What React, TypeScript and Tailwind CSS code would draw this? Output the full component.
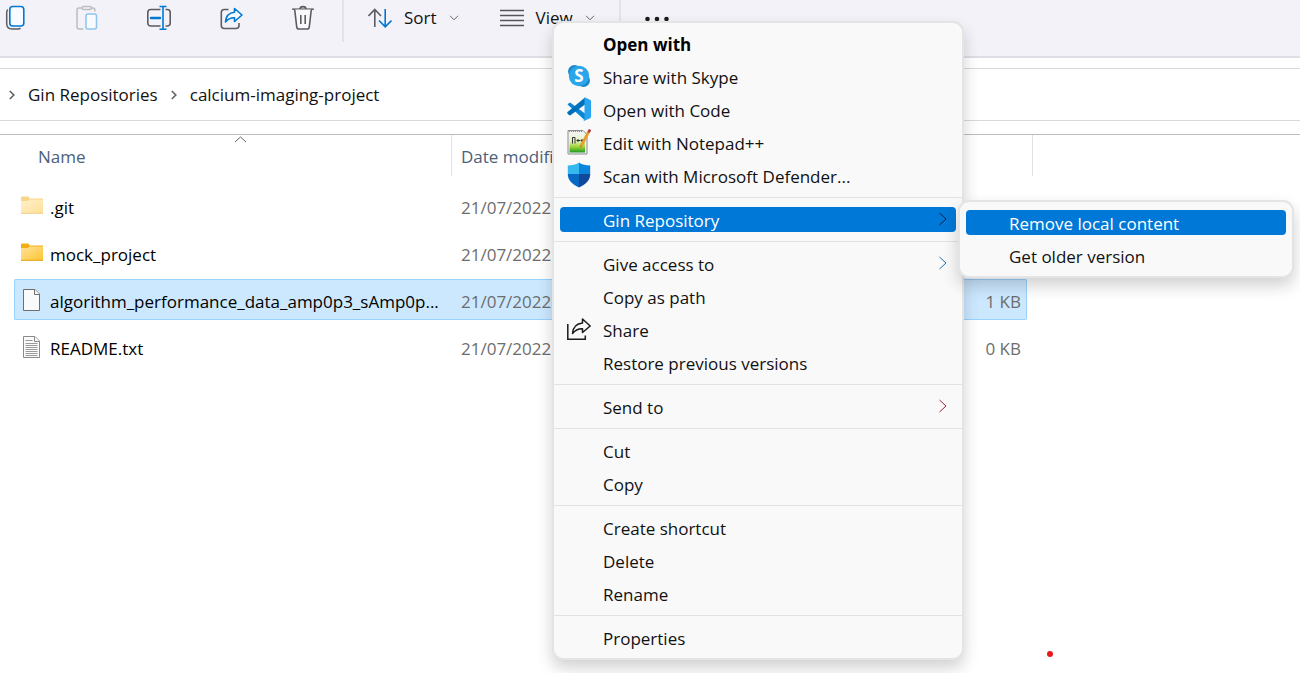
import type { ReactNode } from "react";

const BLUE = "#0078d4";
const GRAY = "#5c5c62";

function CopyIcon() {
  return (
    <svg width="24" height="32" viewBox="0 0 24 32" fill="none" aria-hidden="true">
      <path d="M4.800 9.500C3.900 10.300 3.700 11.500 3.700 13v10.500c0 3.500 1.600 5.500 5.500 5.500h6c1 0 1.700-.3 2.300-1" stroke={GRAY} strokeWidth="1.500" />
      <rect x="6.800" y="6.500" width="14" height="19.500" rx="3" stroke={BLUE} strokeWidth="1.600" fill="#f8fbff" />
    </svg>
  );
}

function PasteIcon() {
  return (
    <svg width="24" height="32" viewBox="0 0 24 32" fill="none" aria-hidden="true">
      <g stroke="#bcbcc2" strokeWidth="1.500">
        <path d="M6.500 8h-2.500c-1.200 0-2 .8-2 2v17c0 1.200.8 2 2 2H8.500" />
        <path d="M17 8h1c1 0 1.800.8 1.800 1.800V11.500" />
        <rect x="7" y="6.600" width="9.500" height="3" rx="1.500" />
      </g>
      <rect x="11" y="14" width="10.500" height="15" rx="2" stroke="#8fc3ee" strokeWidth="1.500" fill="#f7faff" />
    </svg>
  );
}

function RenameIcon() {
  return (
    <svg width="24" height="32" viewBox="0 0 24 32" fill="none" aria-hidden="true">
      <path d="M13.500 9.500H3.700A3 3 0 0 0 .8 12.500v10.500a3 3 0 0 0 3 3H13.500M18.500 9.500h1.700a3 3 0 0 1 3 3v10.500a3 3 0 0 1-3 3H18.500" stroke={GRAY} strokeWidth="1.600" />
      <path d="M4 18h9" stroke={BLUE} strokeWidth="2.400" strokeLinecap="round" />
      <path d="M16 6.500v22M12.500 6.500h7M12.500 29.200h7" stroke={BLUE} strokeWidth="1.600" />
    </svg>
  );
}

function ShareIcon() {
  return (
    <svg width="24" height="32" viewBox="0 0 24 32" fill="none" aria-hidden="true">
      <path d="M9.500 9.500H5.300a3 3 0 0 0-3 3V25.500a3 3 0 0 0 3 3H17a3 3 0 0 0 3-3v-2.500" stroke={GRAY} strokeWidth="1.600" />
      <path d="M15.500 8.500l7.500 6.500-7.500 6.500v-3.800c-4-.2-6.500 1-9 4.200.5-6 3.700-9.200 9-9.700z" stroke={BLUE} strokeWidth="1.600" strokeLinejoin="round" fill="#f7faff" />
    </svg>
  );
}

function TrashIcon() {
  return (
    <svg width="24" height="32" viewBox="0 0 24 32" fill="none" stroke={GRAY} strokeWidth="1.600" aria-hidden="true">
      <path d="M1.200 9.200h21.600" />
      <path d="M9 9.200c0-1.600 1.200-2.600 3-2.600s3 1 3 2.600" />
      <path d="M3.700 9.500l2 17.300c.2 1.500 1 2.200 2.300 2.200h8c1.300 0 2.100-.7 2.300-2.200l2-17.300" fill="#fafafc" />
      <path d="M9.800 15v9M14.200 15v9" />
    </svg>
  );
}

function SortIcon() {
  return (
    <svg width="24" height="32" viewBox="0 2 24 32" fill="none" strokeWidth="1.600" aria-hidden="true">
      <path d="M6.800 27V9.500M.5 16l6.300-6.500 6.200 6.500" stroke={GRAY} />
      <path d="M17.200 9v17.500M11 20.500l6.200 6.300 6.300-6.300" stroke={BLUE} />
    </svg>
  );
}

function ViewIcon() {
  return (
    <svg width="24" height="32" viewBox="0 0 24 32" aria-hidden="true">
      <path d="M0 8.500h24M0 13.500h24M0 18.500h24M0 23.500h24" stroke="#55555a" strokeWidth="1.300" />
    </svg>
  );
}

function DotsIcon() {
  return (
    <svg width="24" height="32" viewBox="0 0 24 32" fill="#1b1b1b" aria-hidden="true">
      <circle cx="2.500" cy="19" r="2.300" />
      <circle cx="12" cy="19" r="2.300" />
      <circle cx="21.500" cy="19" r="2.300" />
    </svg>
  );
}

function ChevronDown() {
  return (
    <svg width="10" height="6" viewBox="0 0 10 6" fill="none" stroke="#66666b" aria-hidden="true">
      <path d="M1 .8l4 4 4-4" />
    </svg>
  );
}

function Crumb() {
  return (
    <svg width="6" height="10" viewBox="0 0 6 10" fill="none" stroke="#606060" strokeWidth="1.600" aria-hidden="true">
      <path d="M.8 1l4 4-4 4" />
    </svg>
  );
}

function FolderIcon({ faded }: { faded?: boolean }) {
  return (
    <svg width="24" height="24" viewBox="0 0 24 24" opacity={faded ? 0.5 : 1} aria-hidden="true">
      <defs>
        <linearGradient id="folder" x1="0" y1="0" x2="1" y2="1">
          <stop offset="0" stopColor="#ffe39a" />
          <stop offset="1" stopColor="#fdc430" />
        </linearGradient>
      </defs>
      <path d="M1 4c0-1 .5-1.500 1.500-1.500h5c1 0 1.500.5 2 2H23v6H1z" fill="#f3ae14" />
      <path d="M1 7h7L9.500 5.500H23v14H1z" fill="url(#folder)" />
      <path d="M1 19.300h22" stroke="#e6a21c" />
    </svg>
  );
}

function FileIcon({ lined }: { lined?: boolean }) {
  return (
    <svg width="24" height="24" viewBox="0 0 24 24" fill="#fafafa" stroke={lined ? "#8a8a8a" : "#6e6e6e"} aria-hidden="true">
      <path d="M3.500 1.500h11.500l4.500 4.500v16.500h-16z" />
      <path d="M14.500 1.500V6.500h5" />
      {lined && (
        <path d="M5.500 5.500h7M5.500 8.500h12M5.500 10.500h12M5.500 12.500h12M5.500 14.500h12M5.500 16.500h12M5.500 18.500h12M5.500 20.500h12" stroke="#9a9a9a" />
      )}
    </svg>
  );
}

function SkypeIcon() {
  return (
    <svg width="24" height="24" viewBox="0 0 24 24" aria-hidden="true">
      <circle cx="7.500" cy="7.500" r="6.500" fill="#1b87c9" />
      <circle cx="16.500" cy="16.500" r="6.500" fill="#1b87c9" />
      <circle cx="12" cy="12" r="10.200" fill="#2aa6ea" />
      <text x="12" y="18" textAnchor="middle" fontSize="17" fontWeight="700" fill="#fff">S</text>
    </svg>
  );
}

function CodeIcon() {
  return (
    <svg width="24" height="24" viewBox="0 0 24 24" aria-hidden="true">
      <path d="M.5 7.500l1.500-1.500c.6-.5 1.200-.5 1.800 0L18 16.500v7z" fill="#0a86d4" />
      <path d="M.5 16.500l1.500 1.500c.6.500 1.200.5 1.800 0L18 7.500V.5L.5 15c-.5.500-.5 1 0 1.500z" fill="#0070ba" />
      <path d="M17.500.3L23 2.800c.6.300 1 .8 1 1.500v15.400c0 .7-.4 1.200-1 1.500l-5.500 2.500c-.6.300-1-.2-1-.7l1-1V2z" fill="#27a5ee" />
    </svg>
  );
}

function NotepadIcon() {
  return (
    <svg width="24" height="26" viewBox="0 0 24 26" aria-hidden="true">
      <defs>
        <linearGradient id="notepad" x1="0" y1="0" x2="0" y2="1">
          <stop offset="0" stopColor="#f4f6f2" />
          <stop offset="0.400" stopColor="#e2efc0" />
          <stop offset="0.700" stopColor="#9ed534" />
          <stop offset="1" stopColor="#1d9a24" />
        </linearGradient>
      </defs>
      <path d="M1 1.500h15l4 4V25H1z" fill="#f2f2f2" stroke="#8c8c8c" />
      <path d="M2.500 4.500h15.500V23.500h-15.500z" fill="url(#notepad)" />
      <path d="M2 2.500h13" stroke="#888" strokeDasharray="1 1" />
      <path d="M5.500 14.500V8.500h2.500v6M9.500 11.500h3.500M11 10v3M13.500 11.500H17M15 10v3" stroke="#333" fill="none" />
      <path d="M21.500 3L14.500 16.500" stroke="#e6a02a" strokeWidth="2.800" />
      <path d="M23 .5l-1.500 3" stroke="#b5393a" strokeWidth="2.600" />
      <path d="M13.300 15.700l-.6 3.500 3-2.300z" fill="#c08a30" />
    </svg>
  );
}

function DefenderIcon() {
  return (
    <svg width="24" height="26" viewBox="0 0 24 26" aria-hidden="true">
      <path d="M12 .5C9 2.800 5 3.500.8 3.500V12.500H12z" fill="#35b8ee" />
      <path d="M12 .5c3 2.300 7 3 11.200 3V12.500H12z" fill="#0b84dc" />
      <path d="M.8 12c0 6.500 4.500 10.500 11.200 13.500V12z" fill="#0669c4" />
      <path d="M23.200 12c0 6.500-4.500 10.500-11.200 13.500V12z" fill="#10499a" />
    </svg>
  );
}

function MenuShareIcon() {
  return (
    <svg width="24" height="24" viewBox="0 0 24 24" fill="none" stroke="#1b1b1b" strokeWidth="1.500" aria-hidden="true">
      <path d="M.8 7v15.300h17.500V18.500" />
      <path d="M15.500 2l7.700 7-7.700 6.500v-3.800c-4.500-.2-7.500 1.500-10 4.800.5-6 4-10 10-10.500z" strokeLinejoin="round" />
    </svg>
  );
}

function ToolButton({ label, children }: { label: string; children: ReactNode }) {
  return (
    <button type="button" aria-label={label} className="flex w-[72px] justify-center">
      {children}
    </button>
  );
}

type Item = { label: string; icon?: ReactNode; bold?: boolean; active?: boolean; arrow?: string; submenu?: Item[] };

const groups: Item[][] = [
  [
    { label: "Open with", bold: true },
    { label: "Share with Skype", icon: <SkypeIcon /> },
    { label: "Open with Code", icon: <CodeIcon /> },
    { label: "Edit with Notepad++", icon: <NotepadIcon /> },
    { label: "Scan with Microsoft Defender...", icon: <DefenderIcon /> },
  ],
  [
    {
      label: "Gin Repository",
      active: true,
      arrow: "#0a1f44",
      submenu: [{ label: "Remove local content", active: true }, { label: "Get older version" }],
    },
  ],
  [
    { label: "Give access to", arrow: "#1f6fb0" },
    { label: "Copy as path" },
    { label: "Share", icon: <MenuShareIcon /> },
    { label: "Restore previous versions" },
  ],
  [{ label: "Send to", arrow: "#a02030" }],
  [{ label: "Cut" }, { label: "Copy" }],
  [{ label: "Create shortcut" }, { label: "Delete" }, { label: "Rename" }],
  [{ label: "Properties" }],
];

function MenuItem({ item }: { item: Item }) {
  return (
    <li role="none" className="relative px-1.5 py-1">
      <button
        type="button"
        role="menuitem"
        aria-haspopup={item.arrow ? "menu" : undefined}
        className={`flex h-[25px] w-full items-center rounded-[4px] pr-2 text-left ${item.active ? "bg-[#0078d7] text-white" : ""} ${item.bold ? "font-bold text-black" : ""}`}
      >
        <span className="flex w-[43px] shrink-0 items-center pb-[2px] pl-[7px]">{item.icon}</span>
        <span className="grow pt-[2px] whitespace-nowrap">{item.label}</span>
        {item.arrow && (
          <svg className="mb-[2px]" width="10" height="14" viewBox="0 0 10 14" fill="none" stroke={item.arrow} aria-hidden="true">
            <path d="M1.500 1l6.500 6-6.500 6" />
          </svg>
        )}
      </button>
      {item.submenu && (
        <Menu label={item.label} groups={[item.submenu]} className="-top-[3px] left-full -ml-1 w-[336px]" />
      )}
    </li>
  );
}

function Menu({ label, groups, className }: { label: string; groups: Item[][]; className: string }) {
  return (
    <ul
      role="menu"
      aria-label={label}
      className={`absolute z-10 rounded-[11px] border-2 border-[#e4e4e4] bg-[#f9f9f9] py-1 text-[#111] shadow-[0_8px_16px_rgba(0,0,0,0.18)] ${className}`}
    >
      {groups.map((group, i) => (
        <li role="none" key={i}>
          {i > 0 && <hr className="my-[5px] border-[#e2e2e2]" />}
          <ul role="none">
            {group.map((item) => (
              <MenuItem key={item.label} item={item} />
            ))}
          </ul>
        </li>
      ))}
    </ul>
  );
}

const files = [
  { name: ".git", icon: <FolderIcon faded />, size: "" },
  { name: "mock_project", icon: <FolderIcon />, size: "" },
  { name: "algorithm_performance_data_amp0p3_sAmp0p...", icon: <FileIcon />, size: "1 KB", selected: true },
  { name: "README.txt", icon: <FileIcon lined />, size: "0 KB" },
];

export default function App() {
  return (
    <div className="relative min-h-screen overflow-hidden bg-white font-['Open_Sans','Noto_Sans',sans-serif] text-[17px] leading-6 text-[#111]">
      <header className="flex h-[58px] items-start border-b-2 border-[#dedee5] bg-[#f2f2f8]">
        <button type="button" aria-label="Copy" className="w-[51px] pl-[3px]">
          <CopyIcon />
        </button>
        <ToolButton label="Paste"><PasteIcon /></ToolButton>
        <ToolButton label="Rename"><RenameIcon /></ToolButton>
        <ToolButton label="Share"><ShareIcon /></ToolButton>
        <ToolButton label="Delete"><TrashIcon /></ToolButton>
        <div className="ml-[3px] h-[42px] w-[2px] bg-[#e2e2e8]" />
        <button type="button" className="ml-6 flex h-9 items-center gap-3">
          <SortIcon />
          <span>Sort</span>
          <ChevronDown />
        </button>
        <button type="button" className="ml-[41px] flex h-9 items-center gap-3">
          <ViewIcon />
          <span>View</span>
          <ChevronDown />
        </button>
        <div className="ml-6 h-[42px] w-[2px] bg-[#e2e2e8]" />
        <button type="button" aria-label="See more" className="ml-6">
          <DotsIcon />
        </button>
      </header>

      <nav aria-label="Address" className="mt-[10px] flex h-[53px] items-center gap-[13px] border-y border-[#d9d9d9] pl-[9px]">
        <Crumb />
        <a href="#repositories">Gin Repositories</a>
        <Crumb />
        <a href="#project">calcium-imaging-project</a>
      </nav>

      <main className="mt-[13px] border-t border-[#bdbdbd]">
        <table className="w-[1033px] table-fixed border-separate border-spacing-0">
          <colgroup>
            <col className="w-[452px]" />
            <col className="w-[200px]" />
            <col />
          </colgroup>
          <thead>
            <tr className="text-left text-[#4c607a]">
              <th scope="col" className="p-0 pb-[6px] font-normal">
                <div className="relative flex h-[41px] items-center border-r border-[#e2e2e2] pt-[2px] pl-[38px]">
                  Name
                  <svg className="absolute top-px left-[234px]" width="13" height="7" viewBox="0 0 13 7" fill="none" stroke="#666" aria-hidden="true">
                    <path d="M1 6l5.500-5L12 6" />
                  </svg>
                </div>
              </th>
              <th scope="col" className="p-0 pb-[6px] font-normal">
                <div className="flex h-[41px] items-center pt-[2px] pl-[9px]">Date modified</div>
              </th>
              <td className="p-0 pb-[6px]">
                <div className="h-[41px] border-r border-[#e2e2e2]" />
              </td>
            </tr>
          </thead>
          <tbody className="text-black">
            {files.map((file) => {
              const fill = file.selected ? "border-[#99d1ff] bg-[#cce8ff]" : "border-transparent";
              return (
                <tr key={file.name} aria-selected={file.selected}>
                  <td className="p-0 py-[3px] pl-[14px]">
                    <div className={`flex h-[41px] items-center gap-[6px] rounded-l-[2px] border-y border-l pl-[5px] ${fill}`}>
                      {file.icon}
                      <span className="pt-1 whitespace-nowrap">{file.name}</span>
                    </div>
                  </td>
                  <td className="p-0 py-[3px]">
                    <div className={`flex h-[41px] items-center border-y pt-1 pl-[9px] text-[#6d6d6d] ${fill}`}>21/07/2022</div>
                  </td>
                  <td className="p-0 py-[3px] pr-[6px]">
                    <div className={`flex h-[41px] items-center justify-end rounded-r-[2px] border-y border-r pt-1 pr-[5px] text-[#6d6d6d] ${fill}`}>{file.size}</div>
                  </td>
                </tr>
              );
            })}
          </tbody>
        </table>
      </main>

      <Menu label="Context menu" groups={groups} className="top-[21px] left-[552px] w-[412px]" />
      <div className="absolute top-[651px] left-[1047px] size-[6px] rounded-full bg-[#e81a1a]" />
    </div>
  );
}
